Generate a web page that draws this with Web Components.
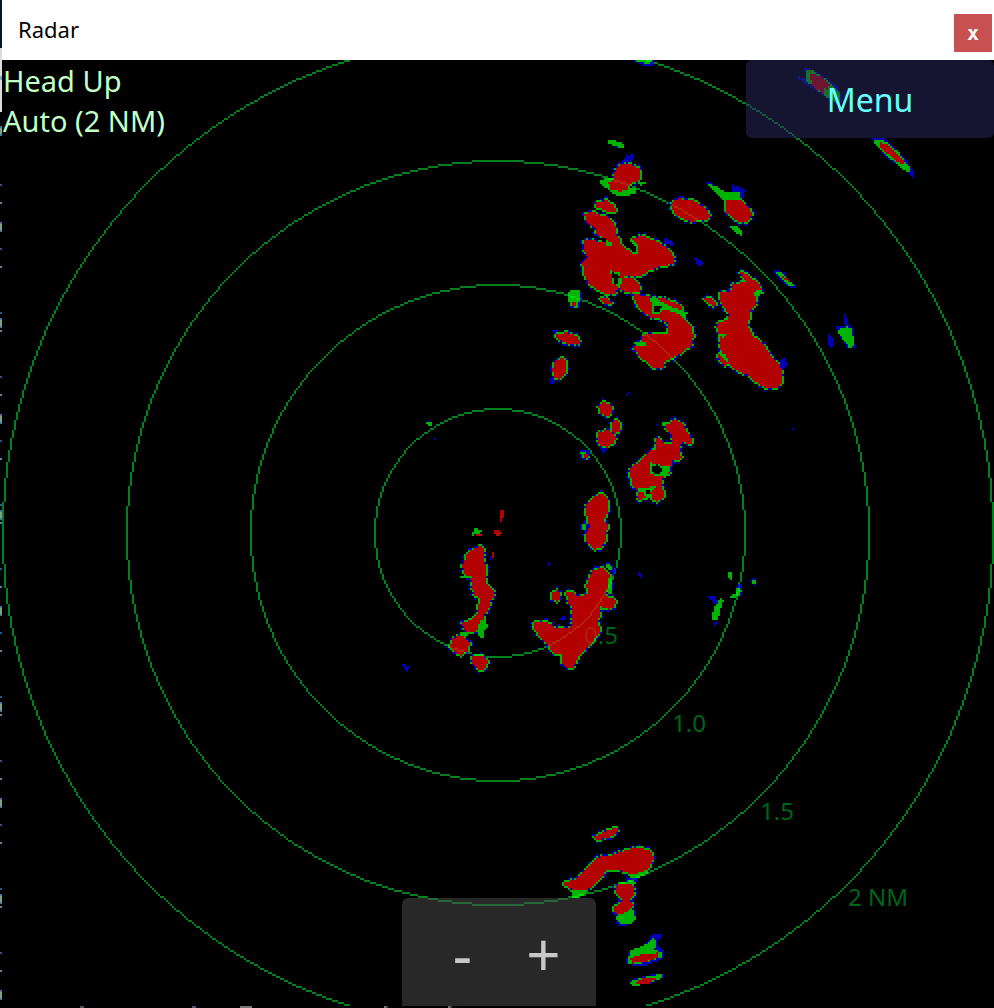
<!DOCTYPE html>
<html lang="en">
<head>
<meta charset="utf-8">
<meta name="viewport" content="width=device-width, initial-scale=1">
<title>Radar</title>
<style>
  body { margin: 0; background: #000; font-family: "Noto Sans", "Open Sans", sans-serif; }
</style>
</head>
<body>
<radar-window>
  <title-bar>Radar</title-bar>
  <radar-view>
    <radar-status slot="status"><span>Head Up</span><span>Auto (2 NM)</span></radar-status>
    <menu-button slot="menu">Menu</menu-button>
    <range-control slot="range"></range-control>
  </radar-view>
</radar-window>
<script>
class Base extends HTMLElement {
  constructor() {
    super();
    this.attachShadow({ mode: 'open' }).innerHTML = this.constructor.html;
  }
}

class RadarWindow extends Base {
  static html = `<style>
    :host { display: grid; grid-template-columns: 2px 1fr; min-height: 100vh; }
    .edge { background:
      linear-gradient(#00142c 48px, #dcdcdc 48px 76px, #94a4c0 76px 80px, #dcdcdc 80px 112px, transparent 112px) no-repeat,
      repeating-linear-gradient(transparent 0 44px, #285a8c 44px 46px, transparent 46px 62px, #5088a0 62px 64px) 0 140px no-repeat,
      repeating-linear-gradient(transparent 0 62px, #4478a0 62px 64px, #80a088 64px 70px, #4478a0 70px 72px, transparent 72px 96px) 0 64px no-repeat,
      #000; }
    .frame { display: flex; flex-direction: column; min-width: 0; }
    .foot { height: 2px; background:
      linear-gradient(90deg, transparent 78px, #456 78px 82px, transparent 82px 190px, #557 190px 194px, transparent 194px 238px, #777 238px 250px, transparent 250px 382px, #5080a0 382px 384px, #703c10 384px 386px, transparent 386px 446px, #5080a0 446px 448px, #703c10 448px 450px, transparent 450px), #000; }
    ::slotted(radar-view) { flex: 1; }
  </style><div class="edge"></div><div class="frame"><slot></slot><div class="foot"></div></div>`;
}

class TitleBar extends Base {
  static html = `<style>
    :host { display: flex; align-items: center; justify-content: space-between; height: 60px;
      box-sizing: border-box; padding: 0 2px 2px 16px; background: #fff; color: #000; font-size: 22px; }
    button { width: 38px; height: 38px; margin-top: 8px; padding: 0; border: 0; background: #c75050; color: #fff;
      font: bold 20px/34px "DejaVu Sans Mono", monospace; }
  </style><span><slot></slot></span><button type="button" aria-label="Close">x</button>`;
}

class RadarStatus extends Base {
  static html = `<style>
    :host { display: flex; flex-direction: column; padding: 1px; color: #c4ffc4; font-size: 29px; line-height: 40px; }
    ::slotted(span) { display: block; }
  </style><slot></slot>`;
}

class MenuButton extends Base {
  static html = `<style>
    :host { display: block; width: 25%; min-width: 160px; }
    button { width: 100%; height: 78px; border: 0; border-radius: 6px; padding: 2px 0 0;
      background: rgba(41, 41, 99, .5); color: #66ffff; font: 32px/40px "Noto Sans", sans-serif; }
  </style><button type="button"><slot></slot></button>`;
}

class RangeControl extends Base {
  static html = `<style>
    :host { display: flex; justify-content: center; width: 194px; height: 108px; box-sizing: border-box;
      padding: 0 12px 0 20px; border-radius: 6px 6px 0 0; background: rgba(80, 80, 80, .5); }
    button { flex: 1; padding: 2px 0 0; border: 0; background: none; color: #c8c8c8; font: 60px/108px "Noto Sans", sans-serif; }
  </style><button type="button" aria-label="Zoom out">-</button><button type="button" aria-label="Zoom in">+</button>`;
}

/* Echo patches: plot origin, then shapes in sixths of a cell.
   r = strong return with a speckled rim, s = bare strong, g = medium, b = weak, k = gap. */
const ECHOES = [
[540,130,`b 200,28 215,28 255,45 255,57 240,56 203,40|g 205,30 235,34 255,46 250,56 228,50 206,40
b 258,66 264,76 285,70 282,86 272,98 244,98 256,82|g 178,152 210,140 225,150 215,185 190,170
g 218,180 290,176 285,192 250,200 218,192|g 290,150 318,158 300,168
r 240,102 272,102 300,116 300,150 272,162 262,180 240,184 212,178 206,158 222,148 226,120
r 400,210 420,206 470,214 500,240 512,264 490,272 450,274 410,258 396,236
b 492,154 510,156 552,184 575,190 576,164 592,168 616,180 612,204 580,206 548,202 546,194 520,180
g 502,162 530,168 555,186 600,186 604,206 548,210 524,182
r 556,212 600,208 622,226 636,250 626,274 600,278 556,246|b 560,286 576,286 584,296 566,294
g 566,286 590,288 610,306 604,316 580,304|r 166,218 200,212 222,224 230,244 212,248 170,232
r 134,252 160,246 184,258 208,262 224,280 232,320 240,390 150,390 134,360 132,334 190,338 196,326 172,316 168,294 140,278
k 160,324 198,324 198,334 170,334|b 374,324 396,330 406,344 400,350 374,338`],
[540,230,`r 132,30 160,30 200,44 214,40 236,20 262,60 294,70 290,40 274,24 310,18 350,34 390,60 404,84 400,104 370,106 322,124 318,134 250,140 240,156 228,190 200,194 170,178 146,160 132,130 128,100 142,80 130,56
r 246,146 280,142 302,166 298,184 270,190 240,178
r 280,194 320,196 340,204 370,204 420,224 436,250 420,252 456,290 460,320 456,346 420,372 400,384 376,390 370,416 340,412 300,380 282,356 290,340 312,350 306,316 340,310 384,312 384,280 360,266 330,262 300,236 284,210
g 240,28 272,28 292,42 298,68 282,72 260,56 242,44|k 246,32 270,32 284,44 290,58 284,68 262,52 244,40
g 212,122 240,126 246,160 236,166 216,162|k 218,128 238,136 234,160 220,160|g 198,32 216,36 214,50 196,46
g 330,204 350,202 360,214 400,232 436,244 436,262 410,250 370,236 334,222
g 334,220 368,220 372,240 358,254 336,250|k 342,226 364,230 358,248 340,244
g 276,336 318,336 318,350 290,348|r 178,206 200,204 216,222 206,224 184,214
b 100,180 122,180 126,206 116,236 90,234|g 88,180 118,180 120,206 112,232 90,230 84,206|s 96,216 108,216 108,228 96,228
b 36,302 60,300 46,312|r 48,312 80,308 110,318 122,336 112,344 80,340 50,324
b 30,440 50,450 40,460 30,460|r 42,398 66,384 80,392 78,430 62,448 44,446 38,420
b 464,84 490,94 488,112 468,100`],
[680,230,`r 182,126 198,130 236,162 248,178 224,184 230,210 228,228 208,248 206,290 216,314 246,338 270,372 292,396 306,420 304,460 288,474 262,476 226,456 200,434 170,422 140,392 122,360 118,316 110,290 116,276 140,272 148,256 120,214 118,188 150,188 158,160 200,158 188,144
g 224,184 256,184 254,192 232,198 222,196|g 114,310 136,312 134,322 114,320|r 72,204 96,206 110,222 100,230 78,214
r 112,370 134,380 146,402 136,408 118,390|g 118,368 136,374 148,396 138,396|b 304,386 318,386 324,404 308,418 300,402
b 282,120 300,122 318,128 322,146 348,166 344,174 322,168 288,138|g 288,124 306,128 344,164 326,168 292,136|s 306,140 318,142 330,154 318,152
b 490,254 498,254 508,288 522,292 526,356 504,356 470,300 470,290 496,290|g 474,300 500,290 514,292 526,350 506,352 478,312
b 446,314 462,326 460,350 450,354 444,336`],
[540,390,`r 176,48 192,36 216,48 216,70 200,80 180,70|r 216,96 232,88 242,100 238,124 226,130 214,118
r 176,126 206,120 228,138 222,160 200,172 176,164|b 180,174 206,176 188,190
b 118,180 148,180 148,210 134,212 118,200|g 120,190 132,182 148,196 146,208 130,206|s 130,192 142,192 142,202 132,202
r 164,318 186,312 206,330 202,372 192,390 202,400 200,446 182,474 162,478 138,454 136,430 148,412 140,370 140,346
b 120,402 148,402 146,424 122,420|g 122,406 136,404 136,418 126,420
r 380,104 404,88 430,100 440,124 458,148 454,162 428,156 418,168 424,206 396,212 388,250 370,260 366,284 372,310 370,326 350,334 334,326 330,306 320,326 294,328 292,298 278,288 272,256 266,240 296,216 330,184 348,176 350,144 366,148 372,162 398,164 398,140 380,120
g 330,218 364,226 392,230 380,262 350,258 330,250|k 336,228 352,224 366,240 358,252 334,248
g 292,296 330,296 334,284 348,290 332,304 334,324 316,322 308,304 296,304|k 316,302 332,302 332,312 316,312
g 366,96 378,98 374,110 364,106|b 258,12 264,12 264,18 258,18|b 264,6 270,6 270,12 264,12|b 348,100 354,100 354,108 348,108`],
[390,500,`r 268,140 280,142 280,184 286,192 286,244 298,262 310,272 310,292 300,306 298,324 284,346 278,380 260,392 232,398 220,388 218,368 244,360 262,338 268,304 272,294 252,284 244,240 220,214 218,196 234,156 248,148
r 190,414 206,408 226,412 238,430 234,452 214,466 202,464 182,446 184,424
r 250,466 276,466 292,484 290,504 272,512 254,500 244,482
g 212,398 240,398 228,408 216,408|g 276,350 282,370 294,376 282,398 278,418 268,410 260,394
s 330,28 342,28 342,46 334,64 328,60 330,44|s 312,96 318,90 330,90 336,98 330,106 318,106
s 306,156 312,156 312,174 306,174|b 300,168 306,168 306,180 300,180
g 256,84 276,90 276,98 260,100 248,112 246,100|s 256,100 276,100 276,108 256,108|g 210,228 244,228 244,236 210,236
b 36,492 42,490 48,498 60,498 54,508 54,516 48,514 40,502`],
[520,550,`r 216,62 248,52 270,72 272,110 256,136 286,150 284,172 266,178 242,170 236,210 238,250 206,290 176,322 160,352 140,354 126,336 126,310 104,310 80,282 44,240 42,218 84,218 104,232 150,236 156,220 158,180 142,150 140,128 160,124 170,140 204,132 200,106 208,84
r 96,126 116,122 122,138 114,154 94,148|b 254,36 272,40 290,62 278,80 272,60
g 256,46 272,42 276,60 262,56|b 274,90 284,96 280,120 270,130|g 266,84 276,100 274,130 260,128 262,108
b 120,204 138,198 138,210 126,210|b 84,36 90,36 90,48 84,48|b 354,66 366,72 364,82 356,76
g 622,66 636,66 636,90 624,86|b 690,88 708,86 708,106 696,104|g 694,86 708,90 706,102 696,100
b 644,106 664,104 668,122 662,140|g 652,108 664,120 662,136 632,146 630,138 648,128
b 564,140 590,140 592,160 580,160|g 600,146 612,150 600,180 596,206 578,212 576,200 582,174|b 582,216 594,218 584,228`],
[540,810,`r 160,84 186,68 228,54 238,60 222,76 180,90
g 258,186 336,170 322,190 300,202 270,202|g 92,242 144,240 130,258 96,266
r 72,220 104,208 134,180 160,154 184,138 224,134 264,118 300,112 334,124 342,142 330,172 310,186 284,192 258,188 240,178 200,178 186,204 160,228 132,242 104,240 76,228
b 256,200 294,206 290,218 262,218|g 262,210 280,210 290,224 262,220
b 224,306 290,300 290,330 252,350 228,344|g 236,310 280,300 288,328 276,340 240,344 228,322
r 240,222 270,220 284,232 282,256 266,268 280,286 266,304 240,312 222,306 222,292 242,278 248,266 230,250 230,230
b 340,370 370,370 350,402 376,424 370,446 320,466 280,466 254,458 270,420 310,410
g 270,422 320,402 340,386 350,396 344,420 368,430 362,444 300,460 262,460|s 272,446 300,434 356,428 356,442 320,454 276,460
b 268,512 320,496 370,490 372,502 330,522 276,526|g 270,514 330,498 366,492 366,504 322,522 276,528|s 286,516 320,502 354,502 326,520 290,522`],
[740,0,`b 192,206 208,206 250,228 290,258 306,290 300,324 276,304 230,274 176,238 176,230 200,236
g 198,210 216,210 260,238 300,276 300,314 262,294 196,240|s 210,220 240,228 268,252 266,270 250,264 252,282 216,258
b 396,416 432,414 466,442 492,468 522,516 520,532 490,508 436,470|g 402,420 432,422 474,454 514,510 504,520 456,480 408,438
s 418,426 442,434 466,454 492,486 486,494 464,480 424,444`],
[420,390,`g 18,96 36,96 36,108 24,108|b 24,90 30,90 30,96 24,96|b 42,144 48,144 48,150 42,150`],
[630,56,`b 6,12 72,12 72,30 36,28|g 12,12 66,12 60,24 36,20`],
[788,420,`b 12,24 18,24 18,30 12,30`],
[540,560,`b 24,6 30,6 30,18 24,18`]
];

class RadarView extends Base {
  static html = `<style>
    :host { display: block; position: relative; overflow: hidden; background: #000; }
    svg { position: absolute; inset: 0; width: 100%; height: 100%; }
    .cells { shape-rendering: crispEdges; }
    text { font: 12px "Noto Sans", sans-serif; fill: #00801f; fill-opacity: .8; }
    ::slotted([slot=status]) { position: absolute; top: 0; left: 0; }
    ::slotted([slot=menu]) { position: absolute; top: 0; right: 0; }
    ::slotted([slot=range]) { position: absolute; bottom: 0; left: 50%; transform: translateX(-50%); margin-left: 1px; }
  </style>
  <svg viewBox="0 0 496 473" preserveAspectRatio="xMidYMid slice" role="img" aria-label="Radar picture">
    <path class="cells" id="rings" fill="#00801f"/>
    <text x="291" y="292">0.5</text><text x="335" y="336">1.0</text>
    <text x="379" y="380">1.5</text><text x="423" y="423">2 NM</text>
    <g class="cells" opacity=".7"><path id="b" fill="#00f"/><path id="g" fill="#0f0"/><path id="r" fill="#f00"/></g>
  </svg>
  <slot name="status"></slot><slot name="menu"></slot><slot name="range"></slot>`;

  connectedCallback() {
    const W = 496, H = 473;
    const grid = new Uint8Array(W * H);
    const code = { k: 0, b: 1, g: 2, r: 3, s: 3 };
    const around = [[1, 0], [-1, 0], [0, 1], [0, -1]];
    const noise = (x, y) => { const v = Math.sin(x * 12.9898 + y * 78.233) * 43758.5453; return v - Math.floor(v); };
    for (const [ox, oy, list] of ECHOES) {
      for (const shape of list.split(/[\n|]/)) {
        const kind = shape.trim()[0];
        const pts = shape.trim().slice(2).split(' ').map(p => {
          const [x, y] = p.split(',').map(Number);
          return [(ox - 2) / 2 + x / 6, (oy - 60) / 2 + y / 6];
        });
        const inside = [];
        const xs = pts.map(p => p[0]), ys = pts.map(p => p[1]);
        for (let y = Math.max(0, Math.floor(Math.min(...ys))); y <= Math.min(H - 1, Math.max(...ys)); y++) {
          for (let x = Math.max(0, Math.floor(Math.min(...xs))); x <= Math.min(W - 1, Math.max(...xs)); x++) {
            let hit = false;
            for (let i = 0, j = pts.length - 1; i < pts.length; j = i++) {
              const [ax, ay] = pts[i], [bx, by] = pts[j];
              if ((ay > y + .5) !== (by > y + .5) && x + .5 < (bx - ax) * (y + .5 - ay) / (by - ay) + ax) hit = !hit;
            }
            if (hit) inside.push([x, y]);
          }
        }
        for (const [x, y] of inside) grid[y * W + x] = code[kind];
        if (kind !== 'r') continue;
        const rim = [];
        for (const [x, y] of inside) for (const [dx, dy] of around) {
          const nx = x + dx, ny = y + dy, at = ny * W + nx;
          if (nx < 0 || ny < 0 || nx >= W || ny >= H || grid[at]) continue;
          grid[at] = noise(nx, ny) < .75 ? 2 : 1;
          if (grid[at] === 2) rim.push([nx, ny]);
        }
        for (const [x, y] of rim) for (const [dx, dy] of around) {
          const nx = x + dx, ny = y + dy, at = ny * W + nx;
          if (nx < 0 || ny < 0 || nx >= W || ny >= H || grid[at]) continue;
          if (noise(nx + 7, ny + 3) < .22) grid[at] = 1;
        }
      }
    }
    const d = ['', '', '', ''];
    for (let y = 0; y < H; y++) for (let x = 0; x < W;) {
      const v = grid[y * W + x];
      let n = 1;
      while (x + n < W && grid[y * W + x + n] === v) n++;
      if (v) d[v] += `M${x} ${y}h${n}v1h-${n}z`;
      x += n;
    }
    ['b', 'g', 'r'].forEach((id, i) => this.shadowRoot.getElementById(id).setAttribute('d', d[i + 1]));

    const cx = 248, cy = 236, seen = new Set();
    for (const r of [62, 124, 186, 248]) {
      for (let i = 0; i <= r; i++) {
        const j = Math.round(Math.sqrt(r * r - i * i));
        if (i > j + 1) break;
        for (const [a, b] of [[i, j], [j, i]]) for (const sy of [1, -1]) {
          seen.add(`M${cx - a} ${cy + sy * b}h1v1h-1z`);
          seen.add(`M${cx + a - 1} ${cy + sy * b}h1v1h-1z`);
        }
      }
    }
    this.shadowRoot.getElementById('rings').setAttribute('d', [...seen].join(''));
  }
}

customElements.define('radar-window', RadarWindow);
customElements.define('title-bar', TitleBar);
customElements.define('radar-status', RadarStatus);
customElements.define('menu-button', MenuButton);
customElements.define('range-control', RangeControl);
customElements.define('radar-view', RadarView);
</script>
</body>
</html>
